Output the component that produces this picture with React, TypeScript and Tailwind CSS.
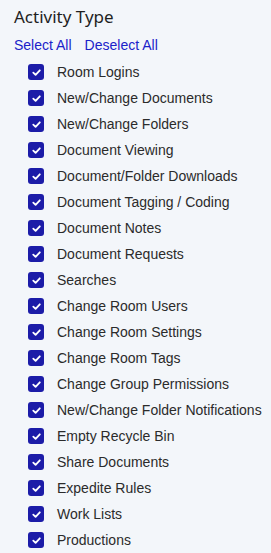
import React from "react";

const items = [
  "Room Logins",
  "New/Change Documents",
  "New/Change Folders",
  "Document Viewing",
  "Document/Folder Downloads",
  "Document Tagging / Coding",
  "Document Notes",
  "Document Requests",
  "Searches",
  "Change Room Users",
  "Change Room Settings",
  "Change Room Tags",
  "Change Group Permissions",
  "New/Change Folder Notifications",
  "Empty Recycle Bin",
  "Share Documents",
  "Expedite Rules",
  "Work Lists",
  "Productions",
];

const Check = () => (
  <span className="w-4 h-4 rounded-[3px] bg-[#1c1ca8] flex items-center justify-center shrink-0">
    <svg width="11" height="11" viewBox="0 0 12 12" fill="none">
      <path d="M2.5 6.2 L5 8.6 L9.6 3.6" stroke="white" strokeWidth="2" strokeLinecap="round" strokeLinejoin="round" />
    </svg>
  </span>
);

export default function App() {
  return (
    <div className="w-[271px] h-[553px] bg-[#f3f6fa] overflow-hidden pl-[14px] pt-[5px]">
      <h2 className="text-[17px] leading-[24px] text-[#1f1f1f] font-['Noto_Sans',sans-serif]">Activity Type</h2>
      <div className="flex gap-[13px] mt-[8px] text-[14px] leading-[16px] text-[#1b22c9] font-['Liberation_Sans',Arial,sans-serif]">
        <span>Select All</span>
        <span>Deselect All</span>
      </div>
      <ul className="mt-[6px] pl-[14px] font-['Liberation_Sans',Arial,sans-serif]">
        {items.map((it) => (
          <li key={it} className="flex items-center gap-[13px] h-[26px]">
            <Check />
            <span className="text-[14px] text-[#2b2b2b]">{it}</span>
          </li>
        ))}
      </ul>
    </div>
  );
}
